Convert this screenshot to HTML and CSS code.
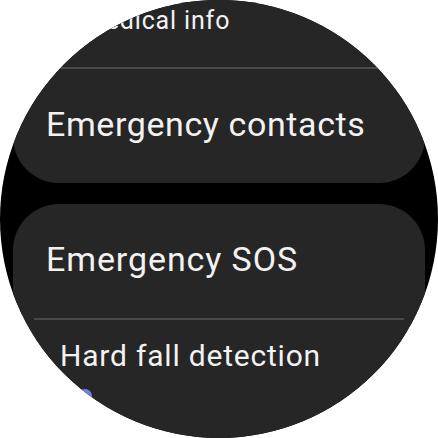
FILE: index.html
```html
<!DOCTYPE html>
<html>
<head>
<meta charset="utf-8">
<link rel="stylesheet" href="styles.css">
</head>
<body>
<div class="watch">
  <div class="list">
    <div class="card card-top">
      <div class="row row-small"><span class="label label-small">Medical info</span></div>
      <div class="divider"></div>
      <div class="row row-main"><span class="label">Emergency contacts</span></div>
    </div>
    <div class="card card-bottom">
      <div class="row row-main"><span class="label label-wide">Emergency SOS</span></div>
      <div class="divider"></div>
      <div class="row row-toggle">
        <span class="label label-mid">Hard fall detection</span>
        <span class="status-dot"></span>
      </div>
    </div>
  </div>
</div>
</body>
</html>
```
FILE: styles.css
```css
html, body {
  margin: 0;
  padding: 0;
  background: #ffffff;
}
.watch {
  width: 438px;
  height: 438px;
  border-radius: 50%;
  background: #000000;
  overflow: hidden;
  font-family: Roboto, "Liberation Sans", sans-serif;
  color: #f2f2f2;
}
.list {
  display: flex;
  flex-direction: column;
  gap: 21px;
  margin-top: -27px;
  padding: 0 13px;
}
.card {
  background: #262626;
  display: flex;
  flex-direction: column;
}
.card-top {
  border-radius: 0 0 46px 46px;
}
.card-bottom {
  border-radius: 46px 46px 0 0;
  height: 260px;
}
.row {
  display: flex;
  align-items: center;
  padding-left: 33px;
}
.row-small {
  height: 94px;
  padding-left: 70px;
}
.row-main {
  height: 114px;
  box-sizing: border-box;
  padding-bottom: 4px;
}
.divider {
  height: 2px;
  background: #48484d;
  margin: 0 21px;
}
.label {
  font-size: 34px;
  line-height: 1;
  letter-spacing: 0.6px;
  white-space: nowrap;
}
.label-wide {
  letter-spacing: 0.9px;
}
.label-small {
  font-size: 25px;
  letter-spacing: 0.85px;
}
.label-mid {
  font-size: 30px;
  letter-spacing: 0.8px;
}
.row-toggle {
  flex-direction: column;
  align-items: flex-start;
  padding-left: 47px;
  padding-top: 21px;
  gap: 18px;
}
.status-dot {
  width: 14px;
  height: 14px;
  border-radius: 50%;
  background: #6b86e6;
  margin-left: 18px;
}
```
